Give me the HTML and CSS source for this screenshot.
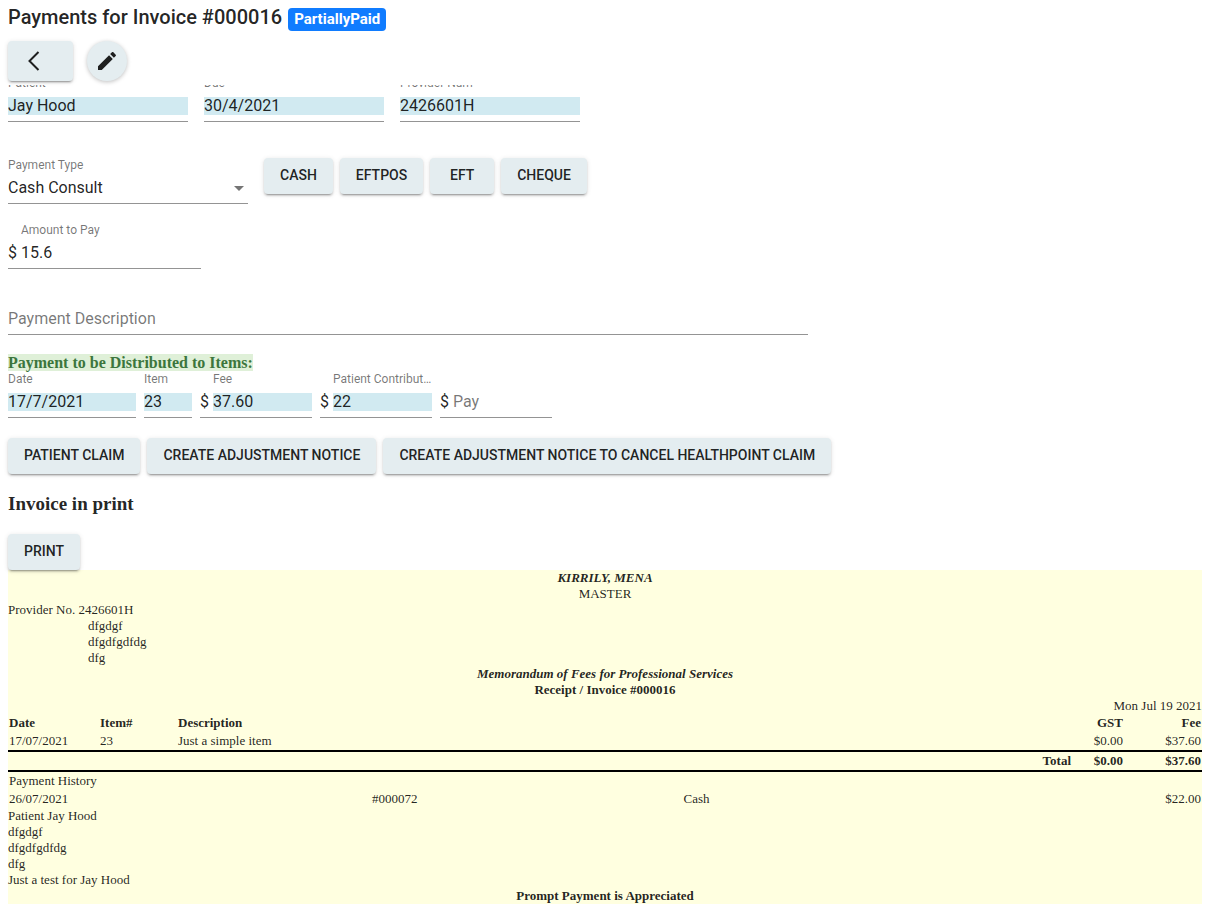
FILE: index.html
```html
<!DOCTYPE html>
<html lang="en">
<head>
  <meta charset="UTF-8" />
  <meta name="viewport" content="width=device-width, initial-scale=1.0"/>
  <title>Payments for Invoice #000016</title>
  <link rel="stylesheet" href="styles.css">
</head>
<body>
  <header class="header">
    <h1 class="title">Payments for Invoice #000016 <span class="badge">PartiallyPaid</span></h1>
    <div class="toolbar">
      <button class="btn btn-back" type="button" aria-label="Back">
        <svg width="24" height="24" viewBox="0 0 24 24" fill="none" stroke="currentColor" stroke-width="2"><path d="M17.5 3 8.5 12l9 9"/></svg>
      </button>
      <button class="btn-round" type="button" aria-label="Edit">
        <svg width="24" height="24" viewBox="0 0 24 24" fill="currentColor"><path d="M3 17.25V21h3.75L17.81 9.94l-3.75-3.75L3 17.25zM20.71 7.04c.39-.39.39-1.02 0-1.41l-2.34-2.34c-.39-.39-1.02-.39-1.41 0l-1.83 1.83 3.75 3.75 1.83-1.83z"/></svg>
      </button>
    </div>
  </header>

  <main class="content">
    <form class="payment">
      <div class="row summary">
        <div class="field medium">
          <label for="patient">Patient</label>
          <div class="control"><input id="patient" value="Jay Hood" readonly></div>
        </div>
        <div class="field medium">
          <label for="due">Due</label>
          <div class="control"><input id="due" value="30/4/2021" readonly></div>
        </div>
        <div class="field medium">
          <label for="provider">Provider Num</label>
          <div class="control"><input id="provider" value="2426601H" readonly></div>
        </div>
      </div>

      <div class="row pay-type">
        <div class="field select">
          <label for="paymentType">Payment Type</label>
          <div class="control">
            <select id="paymentType">
              <option>Cash Consult</option>
            </select>
          </div>
        </div>
        <div class="buttons">
          <button class="btn" type="button">Cash</button>
          <button class="btn" type="button">EFTPOS</button>
          <button class="btn" type="button">EFT</button>
          <button class="btn" type="button">Cheque</button>
        </div>
      </div>

      <div class="field amount prefixed">
        <label for="amount">Amount to Pay</label>
        <div class="control"><span>$</span><input id="amount" value="15.6"></div>
      </div>

      <div class="field description">
        <div class="control"><input id="description" placeholder="Payment Description" aria-label="Payment Description"></div>
      </div>

      <div class="items-title"><strong>Payment to be Distributed to Items:</strong></div>
      <div class="row items">
        <div class="field date">
          <label for="itemDate">Date</label>
          <div class="control"><input id="itemDate" value="17/7/2021" readonly></div>
        </div>
        <div class="field item">
          <label for="itemNo">Item</label>
          <div class="control"><input id="itemNo" value="23" readonly></div>
        </div>
        <div class="field money prefixed">
          <label for="fee">Fee</label>
          <div class="control"><span>$</span><input id="fee" value="37.60" readonly></div>
        </div>
        <div class="field money prefixed">
          <label for="contribution">Patient Contribution</label>
          <div class="control"><span>$</span><input id="contribution" value="22" readonly></div>
        </div>
        <div class="field money prefixed">
          <div class="control"><span>$</span><input id="pay" placeholder="Pay" aria-label="Pay"></div>
        </div>
      </div>

      <div class="buttons">
        <button class="btn" type="button">Patient Claim</button>
        <button class="btn" type="button">Create Adjustment Notice</button>
        <button class="btn" type="button">Create Adjustment Notice to cancel Healthpoint claim</button>
      </div>
    </form>

    <h3 class="print-title">Invoice in print</h3>
    <button class="btn btn-print" type="button">Print</button>

    <section class="invoice">
      <div class="center"><strong><em>KIRRILY, MENA</em></strong></div>
      <div class="center">MASTER</div>
      <div>Provider No. 2426601H</div>
      <div class="address">
        <div>dfgdgf</div>
        <div>dfgdfgdfdg</div>
        <div>dfg</div>
      </div>
      <div class="center"><strong><em>Memorandum of Fees for Professional Services</em></strong></div>
      <div class="center"><strong>Receipt / Invoice #000016</strong></div>
      <div class="right">Mon Jul 19 2021</div>

      <table class="fees">
        <thead>
          <tr>
            <th class="col-date">Date</th>
            <th class="col-item">Item#</th>
            <th>Description</th>
            <th class="col-gst right">GST</th>
            <th class="col-fee right">Fee</th>
          </tr>
        </thead>
        <tbody>
          <tr>
            <td>17/07/2021</td>
            <td>23</td>
            <td>Just a simple item</td>
            <td class="right">$0.00</td>
            <td class="right">$37.60</td>
          </tr>
        </tbody>
        <tfoot>
          <tr class="total">
            <th colspan="3" class="right">Total</th>
            <th class="right">$0.00</th>
            <th class="right">$37.60</th>
          </tr>
        </tfoot>
      </table>

      <table class="history">
        <colgroup>
          <col class="col-paid">
          <col class="col-receipt">
          <col>
          <col>
        </colgroup>
        <tr>
          <td colspan="4">Payment History</td>
        </tr>
        <tr>
          <td>26/07/2021</td>
          <td>#000072</td>
          <td>Cash</td>
          <td class="right">$22.00</td>
        </tr>
      </table>

      <div>Patient Jay Hood</div>
      <div>dfgdgf</div>
      <div>dfgdfgdfdg</div>
      <div>dfg</div>
      <div>Just a test for Jay Hood</div>
      <div class="center"><strong>Prompt Payment is Appreciated</strong></div>
    </section>
  </main>
</body>
</html>
```
FILE: styles.css
```css
:root {
  --text: rgba(0, 0, 0, 0.87);
  --muted: rgba(0, 0, 0, 0.54);
  --button: #e4edf0;
  --readonly: #d1eaf1;
  --shadow: 0 3px 1px -2px rgba(0, 0, 0, 0.2), 0 2px 2px 0 rgba(0, 0, 0, 0.14), 0 1px 5px 0 rgba(0, 0, 0, 0.12);
}

* {
  box-sizing: border-box;
}

body {
  margin: 0;
  padding: 0 8px;
  color: var(--text);
  background: #fff;
  font-family: "Liberation Serif", serif;
}

.header {
  position: relative;
  z-index: 1;
  height: 85px;
  padding-top: 1px;
  background: #fff;
}

.title {
  display: flex;
  align-items: center;
  gap: 6px;
  height: 32px;
  margin: 0 0 8px;
  font: 500 20px/32px Roboto, sans-serif;
}

.badge {
  height: 23px;
  margin-top: 4px;
  padding: 0 6px;
  border-radius: 4px;
  color: #fff;
  background: #107cff;
  font-size: 15px;
  font-weight: 700;
  line-height: 22px;
}

.toolbar {
  display: flex;
  gap: 14px;
}

.btn {
  min-width: 64px;
  height: 36px;
  padding: 0 16px 2px;
  border: none;
  border-radius: 4px;
  color: var(--text);
  background: var(--button);
  box-shadow: var(--shadow);
  font: 500 14px/34px Roboto, sans-serif;
  text-transform: uppercase;
  cursor: pointer;
}

.btn-back,
.btn-round {
  display: flex;
  align-items: center;
  height: 40px;
}

.btn-back {
  width: 65px;
  padding: 0 13px;
}

.btn-round {
  justify-content: center;
  width: 40px;
  padding: 0;
  border: none;
  border-radius: 50%;
  color: var(--text);
  background: var(--button);
  box-shadow: 0 1px 4px rgba(0, 0, 0, 0.25);
  cursor: pointer;
}

.row {
  display: flex;
  gap: 16px;
}

.buttons {
  display: flex;
  gap: 7px;
}

.field {
  display: flex;
  flex-direction: column;
  justify-content: flex-end;
  height: 47px;
  font-family: Roboto, sans-serif;
}

.field label {
  margin-bottom: 6px;
  overflow: hidden;
  color: var(--muted);
  font-size: 12px;
  line-height: 16px;
  text-overflow: ellipsis;
  white-space: nowrap;
}

.control {
  display: flex;
  padding-bottom: 6px;
  border-bottom: 1px solid #949494;
  font-size: 16px;
  line-height: 18px;
}

.control span {
  width: 13px;
}

.control input,
.control select {
  flex: 1;
  width: 100%;
  min-width: 0;
  height: 18px;
  padding: 0;
  border: none;
  outline: none;
  color: var(--text);
  background: none;
  font: 400 16px/18px Roboto, sans-serif;
}

.control input:read-only {
  background: var(--readonly);
}

.control input::placeholder {
  color: var(--muted);
}

.prefixed label {
  margin-left: 13px;
}

.control select {
  appearance: none;
}

.select .control {
  align-items: center;
}

.select .control::after {
  content: "";
  margin-right: 4px;
  border: 5px solid transparent;
  border-top-color: var(--muted);
  border-bottom: none;
}

/* the content has scrolled a little way under the header */
.summary {
  margin-top: -10px;
}

.medium {
  width: 180px;
}

.pay-type {
  margin-top: 35px;
}

.pay-type .buttons {
  padding-top: 1px;
}

.select {
  width: 240px;
}

.amount {
  width: 193px;
  margin-top: 18px;
}

.description {
  width: 800px;
  max-width: 100%;
  margin-top: 19px;
}

.items-title {
  margin-top: 20px;
  font-size: 16px;
  line-height: 16px;
}

.items-title strong {
  color: #3c763d;
  background: #dff0d8;
}

.items {
  gap: 8px;
  margin-bottom: 20px;
}

.date {
  width: 128px;
}

.item {
  width: 48px;
}

.money {
  width: 112px;
}

.print-title {
  margin: 20px 0;
  font-size: 19px;
  line-height: 20px;
}

.btn-print {
  position: relative;
  display: block;
}

.invoice {
  margin: 0 3px 8px 0;
  background: #ffffe0;
  font-size: 13px;
  line-height: 16px;
}

.center {
  text-align: center;
}

.address {
  padding-left: 80px;
}

.invoice table {
  width: 100%;
  border-collapse: collapse;
  table-layout: fixed;
}

.invoice th,
.invoice td {
  padding: 1px;
  text-align: left;
}

.invoice .right {
  text-align: right;
}

.total th {
  border-top: 2px solid #000;
  border-bottom: 2px solid #000;
}

.col-date {
  width: 91px;
}

.col-item {
  width: 78px;
}

.col-gst {
  width: 52px;
}

.col-fee {
  width: 78px;
}

.col-paid {
  width: 30.4%;
}

.col-receipt {
  width: 26.1%;
}
```
